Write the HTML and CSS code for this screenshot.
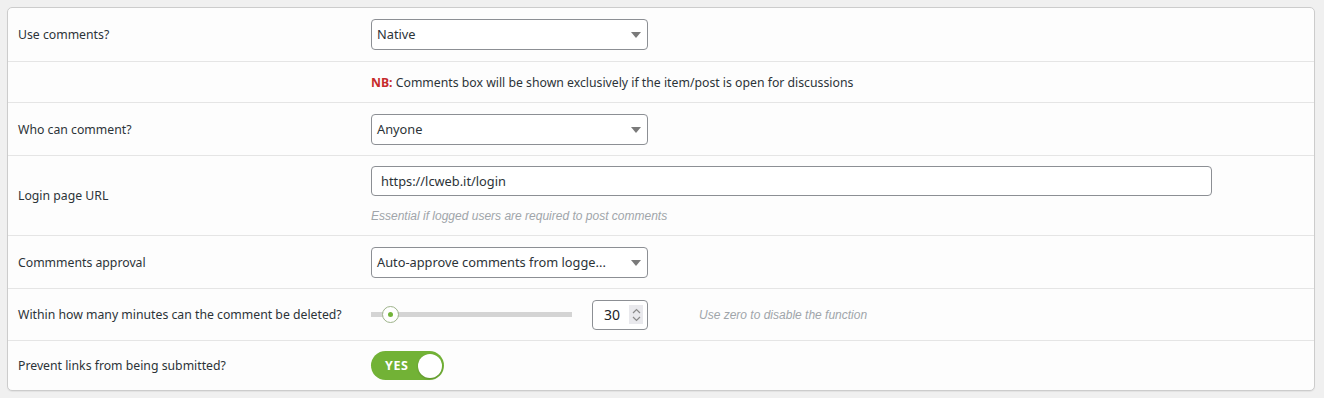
FILE: index.html
```html
<!DOCTYPE html>
<html>
    <head>
        <link rel="stylesheet" href="styles.css">
    </head>
    <body>
        <div class="settings">
            <div class="row first">
                <div class="label">Use comments?</div>
                <div class="field">
                    <div class="select">Native<span class="caret"></span></div>
                </div>
            </div>
            <div class="row notice">
                <div class="label"></div>
                <div class="field">
                    <p><b>NB:</b> Comments box will be shown exclusively if the item/post is open for discussions</p>
                </div>
            </div>
            <div class="row">
                <div class="label">Who can comment?</div>
                <div class="field">
                    <div class="select">Anyone<span class="caret"></span></div>
                </div>
            </div>
            <div class="row">
                <div class="label">Login page URL</div>
                <div class="field column">
                    <div class="textinput">https://lcweb.it/login</div>
                    <span class="hint">Essential if logged users are required to post comments</span>
                </div>
            </div>
            <div class="row">
                <div class="label">Commments approval</div>
                <div class="field">
                    <div class="select">Auto-approve comments from logge...<span class="caret"></span></div>
                </div>
            </div>
            <div class="row slim">
                <div class="label">Within how many minutes can the comment be deleted?</div>
                <div class="field">
                    <div class="slider"><span class="thumb"></span></div>
                    <div class="number">30
                        <span class="spin">
                            <svg width="9" height="16" viewBox="0 0 9 16"><path d="M1 6 L4.5 2.5 L8 6 M1 10 L4.5 13.5 L8 10" fill="none" stroke="#8a8a8a" stroke-width="1.2"/></svg>
                        </span>
                    </div>
                    <span class="hint side">Use zero to disable the function</span>
                </div>
            </div>
            <div class="row last">
                <div class="label">Prevent links from being submitted?</div>
                <div class="field">
                    <div class="toggle"><span>YES</span><span class="knob"></span></div>
                </div>
            </div>
        </div>
    </body>
</html>
```

FILE: styles.css
```css
body {
    margin: 0;
    padding: 7px 9px 7px 7px;
    background-color: #f0f0f0;
    font-family: 'Noto Sans', sans-serif;
    font-size: 12.25px;
    color: #2c3338;
}
.settings {
    background-color: #fdfdfd;
    border: 1px solid #cccccc;
    border-radius: 5px;
    box-shadow: 0 1px 1px rgba(0, 0, 0, 0.06);
}
.row {
    display: grid;
    grid-template-columns: 363px 1fr;
    align-items: center;
    border-bottom: 1px solid #e5e5e5;
    min-height: 52px;
}
.row.first {
    min-height: 53px;
}
.row.slim {
    min-height: 51px;
}
.row.last {
    border-bottom: none;
    min-height: 49px;
}
.row.notice {
    min-height: 40px;
}
.label {
    padding-left: 10px;
}
.field {
    display: flex;
    align-items: center;
    padding: 10px 0;
}
.field.column {
    flex-direction: column;
    align-items: flex-start;
    padding: 10px 0 12px;
}
.field p {
    margin: 0;
}
.field p b {
    color: #c62b2b;
}
.select {
    position: relative;
    box-sizing: border-box;
    width: 277px;
    height: 31px;
    line-height: 29px;
    padding: 0 5px;
    border: 1px solid #8c8f94;
    border-radius: 4px;
    background-color: #ffffff;
    font-size: 12.8px;
    white-space: nowrap;
}
.caret {
    position: absolute;
    right: 6px;
    top: 12px;
    border-left: 5px solid transparent;
    border-right: 5px solid transparent;
    border-top: 6px solid #7a7a7a;
}
.textinput {
    box-sizing: border-box;
    width: 841px;
    height: 30px;
    line-height: 28px;
    padding: 0 9px;
    border: 1px solid #8c8f94;
    border-radius: 4px;
    background-color: #ffffff;
    font-size: 12.8px;
}
.hint {
    font-family: 'Liberation Sans', sans-serif;
    font-style: italic;
    font-size: 12px;
    color: #a0a5aa;
    margin-top: 13px;
}
.hint.side {
    margin: 0 0 0 51px;
}
.slider {
    position: relative;
    width: 201px;
    height: 5px;
    background-color: #d4d4d4;
    margin-right: 20px;
}
.thumb {
    position: absolute;
    left: 11px;
    top: -6px;
    box-sizing: border-box;
    width: 17px;
    height: 17px;
    border: 1px solid #9db38a;
    border-radius: 50%;
    background-color: #ffffff;
}
.thumb::after {
    content: '';
    position: absolute;
    left: 5px;
    top: 5px;
    width: 5px;
    height: 5px;
    border-radius: 50%;
    background-color: #73b43a;
}
.number {
    display: flex;
    align-items: center;
    justify-content: space-between;
    box-sizing: border-box;
    width: 56px;
    height: 30px;
    padding: 0 4px 0 11px;
    border: 1px solid #8c8f94;
    border-radius: 4px;
    background-color: #ffffff;
    font-size: 14px;
    color: #1d2327;
}
.spin {
    display: flex;
    align-items: center;
    justify-content: center;
    width: 14px;
    height: 19px;
    background-color: #e9e9ed;
}
.toggle {
    display: flex;
    align-items: center;
    justify-content: space-between;
    box-sizing: border-box;
    width: 73px;
    height: 29px;
    padding: 0 2px 0 14px;
    border-radius: 15px;
    background-color: #72b236;
    color: #ffffff;
    font-weight: 700;
    font-size: 12.5px;
    letter-spacing: 0.6px;
}
.knob {
    width: 24px;
    height: 24px;
    border-radius: 50%;
    background-color: #ffffff;
    box-shadow: 0 1px 2px rgba(0, 0, 0, 0.2);
}
```
